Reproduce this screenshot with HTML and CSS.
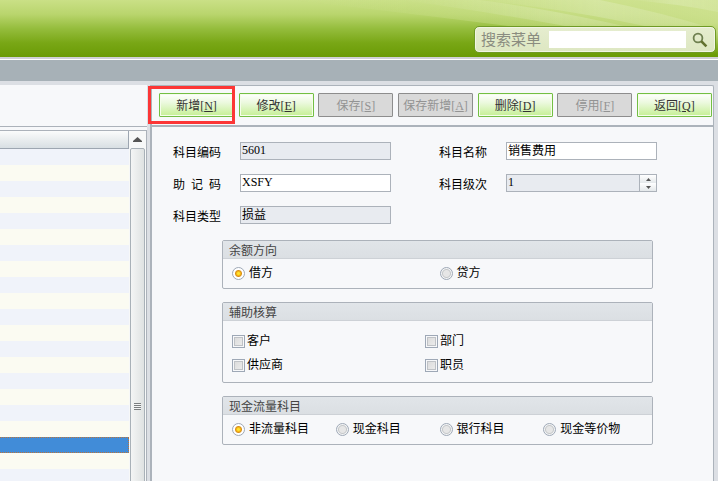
FILE: index.html
```html
<!DOCTYPE html>
<html lang="zh-CN">
<head>
    <meta charset="UTF-8">
    <meta name="viewport" content="width=device-width, initial-scale=1.0">
    <title>科目</title>
    <link rel="stylesheet" href="styles.css">
</head>
<body>
  <header class="header">
    <svg class="rays" viewBox="0 0 718 57" preserveAspectRatio="none" aria-hidden="true">
      <defs>
        <linearGradient id="fade" x1="0" y1="0" x2="1" y2="0">
          <stop offset="0" stop-color="#fff" stop-opacity="0"/>
          <stop offset="0.5" stop-color="#fff" stop-opacity="0.18"/>
          <stop offset="1" stop-color="#fff" stop-opacity="0.12"/>
        </linearGradient>
        <linearGradient id="glow" x1="0" y1="0" x2="1" y2="0">
          <stop offset="0" stop-color="#cfe292" stop-opacity="0"/>
          <stop offset="1" stop-color="#cfe292" stop-opacity="0.85"/>
        </linearGradient>
      </defs>
      <path d="M290 0 L718 0 L718 57 Q560 30 290 0Z" fill="url(#glow)"/>
      <path d="M400 0 L480 0 Q590 14 718 50 L718 57 Q540 18 400 0Z" fill="url(#fade)"/>
      <path d="M480 0 L600 0 Q660 12 718 30 L718 44 Q610 14 480 0Z" fill="url(#fade)"/>
      <path d="M630 0 L718 0 L718 12 Q680 4 630 0Z" fill="url(#fade)"/>
    </svg>
    <form class="search">
      <label class="search-label" for="menuSearch">搜索菜单</label>
      <input class="search-input" id="menuSearch" type="text">
      <button class="search-btn" type="button" aria-label="搜索">
        <svg width="16" height="16" viewBox="0 0 16 16">
          <circle cx="6" cy="6" r="4.4" fill="none" stroke="#6f8050" stroke-width="1.8"/>
          <path d="M9.2 9.2 L14.4 14.4" stroke="#62712f" stroke-width="2.6"/>
        </svg>
      </button>
    </form>
  </header>
  <div class="tab-bar"></div>

  <main class="main">
    <section class="left">
      <div class="left-top"></div>
      <div class="list">
        <table class="list-table">
          <thead><tr><th></th></tr></thead>
          <tbody>
            <tr><td></td></tr>
            <tr><td></td></tr>
            <tr><td></td></tr>
            <tr><td></td></tr>
            <tr><td></td></tr>
            <tr><td></td></tr>
            <tr><td></td></tr>
            <tr><td></td></tr>
            <tr><td></td></tr>
            <tr><td></td></tr>
            <tr><td></td></tr>
            <tr><td></td></tr>
            <tr><td></td></tr>
            <tr><td></td></tr>
            <tr><td></td></tr>
            <tr><td></td></tr>
            <tr><td></td></tr>
            <tr><td></td></tr>
            <tr class="selected"><td></td></tr>
            <tr><td></td></tr>
            <tr><td></td></tr>
          </tbody>
        </table>
        <div class="scroll">
          <button class="scroll-up" type="button" aria-label="向上">
            <svg width="9" height="5" viewBox="0 0 9 5"><path d="M4.5 0 L9 4 V5 H0 V4Z" fill="#555"/></svg>
          </button>
          <div class="scroll-thumb"><span class="grip"></span></div>
        </div>
      </div>
    </section>

    <section class="right">
      <div class="toolbar">
        <div class="marked">
          <button class="btn" type="button">新增[<u>N</u>]</button>
        </div>
        <button class="btn" type="button">修改[<u>E</u>]</button>
        <button class="btn" type="button" disabled>保存[<u>S</u>]</button>
        <button class="btn" type="button" disabled>保存新增[<u>A</u>]</button>
        <button class="btn" type="button">删除[<u>D</u>]</button>
        <button class="btn" type="button" disabled>停用[<u>F</u>]</button>
        <button class="btn" type="button">返回[<u>Q</u>]</button>
      </div>

      <form class="content">
        <div class="fields">
          <div class="field">
            <label for="code">科目编码</label>
            <input class="text" id="code" type="text" value="5601" readonly>
          </div>
          <div class="field">
            <label for="name">科目名称</label>
            <input class="text" id="name" type="text" value="销售费用">
          </div>
          <div class="field">
            <label class="spread" for="memo"><span>助</span><span>记</span><span>码</span></label>
            <input class="text" id="memo" type="text" value="XSFY">
          </div>
          <div class="field">
            <label for="level">科目级次</label>
            <div class="spinner">
              <input class="text" id="level" type="text" value="1" readonly>
              <div class="steps">
                <button class="step" type="button" aria-label="增加">
                  <svg width="5" height="3" viewBox="0 0 5 3"><path d="M2.5 0 L5 3 H0Z" fill="#555"/></svg>
                </button>
                <button class="step" type="button" aria-label="减少">
                  <svg width="5" height="3" viewBox="0 0 5 3"><path d="M0 0 H5 L2.5 3Z" fill="#555"/></svg>
                </button>
              </div>
            </div>
          </div>
          <div class="field">
            <label for="type">科目类型</label>
            <input class="text" id="type" type="text" value="损益" readonly>
          </div>
        </div>

        <div class="groups">
          <section class="group">
            <h2 class="group-title">余额方向</h2>
            <div class="options two">
              <label class="option"><input class="radio" type="radio" name="direction" checked>借方</label>
              <label class="option"><input class="radio" type="radio" name="direction">贷方</label>
            </div>
          </section>

          <section class="group">
            <h2 class="group-title">辅助核算</h2>
            <div class="options checks">
              <label class="option"><input class="check" type="checkbox">客户</label>
              <label class="option"><input class="check" type="checkbox">部门</label>
              <label class="option"><input class="check" type="checkbox">供应商</label>
              <label class="option"><input class="check" type="checkbox">职员</label>
            </div>
          </section>

          <section class="group">
            <h2 class="group-title">现金流量科目</h2>
            <div class="options four">
              <label class="option"><input class="radio" type="radio" name="cash" checked>非流量科目</label>
              <label class="option"><input class="radio" type="radio" name="cash">现金科目</label>
              <label class="option"><input class="radio" type="radio" name="cash">银行科目</label>
              <label class="option"><input class="radio" type="radio" name="cash">现金等价物</label>
            </div>
          </section>
        </div>
      </form>
    </section>
  </main>
</body>
</html>
```
FILE: styles.css
```css
* {
    box-sizing: border-box;
}

body {
    margin: 0;
    height: 100vh;
    overflow: hidden;
    display: flex;
    flex-direction: column;
    background-color: #dcdfe4;
    color: #000;
    font-family: "Liberation Serif", "Noto Sans CJK SC", sans-serif;
    font-size: 12px;
    line-height: 18px;
}

button,
input {
    margin: 0;
    padding: 0;
    font: inherit;
    color: inherit;
}

/* header */

.header {
    position: relative;
    flex: none;
    height: 57px;
    padding: 26px 2px 0 0;
    display: flex;
    justify-content: flex-end;
    align-items: flex-start;
    background: linear-gradient(#cae086, #b9d56d 25%, #95bd3d 50%, #79a716 75%, #6a9b05);
}

.rays {
    position: absolute;
    inset: 0;
    width: 100%;
    height: 100%;
    -webkit-mask-image: linear-gradient(#000 40%, transparent 95%);
    mask-image: linear-gradient(#000 40%, transparent 95%);
}

.search {
    position: relative;
    width: 242px;
    height: 27px;
    padding: 0 7px 0 6px;
    display: flex;
    align-items: center;
    border: 1px solid #6f9a25;
    border-radius: 5px;
    background: linear-gradient(#e6edcf, #dde7c2);
    box-shadow: inset 0 0 0 1px #f1f5e4;
}

.search-label {
    width: 68px;
    font-size: 15px;
    color: #8a8c80;
}

.search-input {
    flex: 1;
    min-width: 0;
    height: 17px;
    border: none;
    background-color: #fff;
}

.search-btn {
    width: 22px;
    height: 16px;
    display: flex;
    justify-content: flex-end;
    border: none;
    background: none;
}

.tab-bar {
    flex: none;
    height: 22px;
    margin: 2px 0 4px;
    border-top: 1px solid #fff;
    background-color: #a7b1b7;
    box-shadow: 0 -2px #d0d0d6;
}

/* main area */

.main {
    flex: 1;
    min-height: 0;
    padding: 0 4px 0 0;
    display: flex;
}

.left {
    width: 150px;
    display: flex;
    flex-direction: column;
    background-color: #f7f8fa;
    border-right: 3px solid #dcdfe4;
}

.left-top {
    flex: none;
    height: 42px;
    border-bottom: 1px solid #acb2ba;
}

.list {
    flex: 1;
    min-height: 0;
    margin-top: 3px;
    display: flex;
    align-items: flex-start;
    overflow: hidden;
    border-top: 1px solid #acb2ba;
    border-right: 1px solid #acb2ba;
    background-color: #fff;
}

.list-table {
    flex: 1;
    border-collapse: separate;
    border-spacing: 0;
}

.list-table th {
    height: 18px;
    padding: 0;
    border-right: 1px solid #9da6b1;
    border-bottom: 1px solid #9da6b1;
    background: linear-gradient(#fbfcfc, #e8ecee 55%, #d8dfe3);
}

.list-table td {
    height: 16px;
    padding: 0;
    background-color: #fbfbf2;
}

.list-table tr:nth-child(odd) td {
    background-color: #f0f3fa;
}

.list-table .selected:nth-child(odd) td {
    background-color: #418cd8;
    border: 1px dotted #b9743c;
    border-left: none;
}

.scroll {
    width: 17px;
    padding: 0 1px;
    background-color: #f7f8f8;
}

.scroll-up {
    width: 15px;
    height: 17px;
    display: flex;
    justify-content: center;
    align-items: center;
    border: none;
    background: none;
}

.scroll-thumb {
    height: 516px;
    display: flex;
    justify-content: center;
    align-items: center;
    border: 1px solid #a9b1b8;
    border-radius: 2px;
    background: linear-gradient(to right, #f4f5f5, #dfe2e2);
}

.grip {
    width: 7px;
    height: 7px;
    background: repeating-linear-gradient(#7b7e80 0 1px, #f4f5f5 1px 2px);
}

.right {
    flex: 1;
    min-width: 0;
    display: flex;
    flex-direction: column;
    border: 1px solid #acb3bb;
    border-left-width: 2px;
    border-bottom: none;
    border-top-right-radius: 2px;
    background-color: #f7f8fa;
}

/* toolbar */

.toolbar {
    flex: none;
    height: 41px;
    padding: 7px 1px 0 7px;
    display: flex;
    justify-content: space-between;
    align-items: flex-start;
    border-bottom: 2px solid #acb3bb;
}

.btn {
    width: 75px;
    height: 24px;
    padding-top: 1px;
    border: 1px solid #73bf43;
    border-radius: 1px;
    background: linear-gradient(#fff, #ebf9dd 40%, #c5ef94);
    box-shadow: inset 0 0 0 1px #f5fdeb;
    color: #333;
    white-space: nowrap;
}

.btn:disabled {
    border-color: #8d8d8d;
    background: #d9d9d9;
    box-shadow: none;
    color: #939393;
}

.marked {
    position: relative;
    display: flex;
}

.marked::after {
    content: "";
    position: absolute;
    inset: -7px -1px -7px -11px;
    border: 3px solid #fc3636;
    pointer-events: none;
}

/* form */

.content {
    padding-top: 15px;
}

.fields {
    padding-left: 21px;
    display: grid;
    grid-template-columns: 218px 218px;
    column-gap: 48px;
    row-gap: 14px;
}

.field {
    height: 18px;
    display: grid;
    grid-template-columns: 48px 151px;
    column-gap: 19px;
    line-height: 22px;
}

.spread {
    display: flex;
    justify-content: space-between;
}

.text {
    width: 100%;
    height: 18px;
    padding: 0 1px 2px;
    border: 1px solid #acb2ba;
    border-radius: 0;
    outline: none;
    background-color: #fff;
    line-height: 14px;
}

.text:read-only {
    background-color: #e8ebf0;
}

.spinner {
    display: flex;
}

.spinner .text {
    flex: 1;
    min-width: 0;
}

.steps {
    width: 17px;
    height: 18px;
    display: flex;
    flex-direction: column;
    border: 1px solid #acb2ba;
    border-left: none;
}

.step {
    flex: 1;
    min-height: 0;
    display: flex;
    justify-content: center;
    align-items: center;
    border: none;
    background: linear-gradient(#fff, #e4e8ea);
}

/* option groups */

.groups {
    margin: 16px 60px 0 70px;
    display: flex;
    flex-direction: column;
    gap: 13px;
}

.group {
    border: 1px solid #acb2ba;
    border-radius: 2px;
}

.group-title {
    height: 18px;
    margin: 0;
    padding-left: 6px;
    border-bottom: 1px solid #cdd1d6;
    background: linear-gradient(#e1e5e9, #dbdfe3);
    color: #444;
    font-size: 12px;
    font-weight: normal;
    line-height: 20px;
}

.options {
    padding: 5px 5px 6px 9px;
    display: grid;
}

.two {
    grid-template-columns: 1fr 1fr;
}

.four {
    grid-template-columns: repeat(4, 1fr);
}

.checks {
    padding: 11px 5px 8px 9px;
    grid-template-columns: 193px 1fr;
    row-gap: 6px;
}

.option {
    height: 18px;
    display: flex;
    align-items: center;
    gap: 4px;
    line-height: 20px;
    white-space: nowrap;
}

.checks .option {
    gap: 2px;
}

.radio,
.check {
    appearance: none;
    flex: none;
    width: 13px;
    height: 13px;
    border: 1px solid #9ea8b6;
}

.radio {
    border-radius: 50%;
    background: radial-gradient(circle, #e6e6e6 0 3px, #c5c8ca 4px, #f3f4f5 5px);
}

.radio:checked {
    background: radial-gradient(circle, #ffe22e 0 1px, #f5b716 2px, #d9901c 3px, #fff 4px);
}

.check {
    background: linear-gradient(135deg, #d8d8d8, #efefef) padding-box;
    box-shadow: inset 0 0 0 1px #f7f8fa, inset 0 0 0 2px #bfc2c6;
}
```
